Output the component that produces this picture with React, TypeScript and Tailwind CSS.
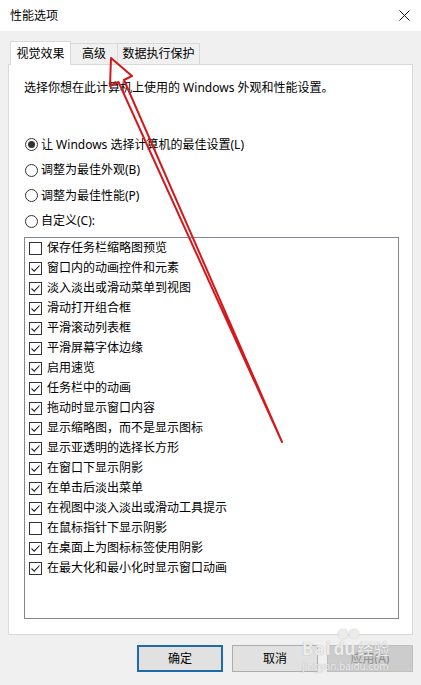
const effects: [string, boolean][] = [
  ["保存任务栏缩略图预览", false],
  ["窗口内的动画控件和元素", true],
  ["淡入淡出或滑动菜单到视图", true],
  ["滑动打开组合框", true],
  ["平滑滚动列表框", true],
  ["平滑屏幕字体边缘", true],
  ["启用速览", true],
  ["任务栏中的动画", true],
  ["拖动时显示窗口内容", true],
  ["显示缩略图，而不是显示图标", true],
  ["显示亚透明的选择长方形", true],
  ["在窗口下显示阴影", true],
  ["在单击后淡出菜单", true],
  ["在视图中淡入淡出或滑动工具提示", true],
  ["在鼠标指针下显示阴影", false],
  ["在桌面上为图标标签使用阴影", true],
  ["在最大化和最小化时显示窗口动画", true],
]

const modes = ["让 Windows 选择计算机的最佳设置(L)", "调整为最佳外观(B)", "调整为最佳性能(P)", "自定义(C):"]

function Radio({ label, on }: { label: string; on: boolean }) {
  return (
    <div className="flex items-center h-[25.5px]">
      <span className="w-[13px] h-[13px] rounded-full border border-[#333] bg-white flex items-center justify-center">
        {on && <span className="w-[7px] h-[7px] rounded-full bg-[#333]" />}
      </span>
      <span className="ml-[3px]">{label}</span>
    </div>
  )
}

function Check({ label, on }: { label: string; on: boolean }) {
  return (
    <div className="flex items-center h-[20px] pl-[4px]">
      <span className="w-[13px] h-[13px] border border-[#333] bg-white flex items-center justify-center">
        {on && (
          <svg width="11" height="11" viewBox="0 0 11 11">
            <path d="M1.5 5.5 L4.2 8.2 L9.5 2.5" fill="none" stroke="#222" strokeWidth="1.1" />
          </svg>
        )}
      </span>
      <span className="ml-[5px]">{label}</span>
    </div>
  )
}

export default function App() {
  return (
    <div className="relative w-[421px] h-[685px] bg-[#f0f0f0] text-[12px] leading-[16px] text-black font-['Noto_Sans','Noto_Sans_CJK_SC',sans-serif] overflow-hidden">
      {/* title bar */}
      <div className="h-[31px] bg-white flex items-center justify-between pl-[10px] pr-[11px]">
        <span>性能选项</span>
        <svg width="11" height="11" viewBox="0 0 11 11">
          <path d="M0.5 0.5 L10.5 10.5 M10.5 0.5 L0.5 10.5" stroke="#111" strokeWidth="1" />
        </svg>
      </div>

      <div className="px-[8px] pt-[10px]">
        {/* tabs */}
        <div className="flex items-end pl-[2px] h-[23px]">
          <div className="relative z-10 h-[24px] -mb-px bg-white border border-b-0 border-[#d9d9d9] w-[61px] flex items-center justify-center">
            视觉效果
          </div>
          <div className="h-[21px] bg-[#f0f0f0] border border-l-0 border-b-0 border-[#d9d9d9] w-[47px] flex items-center justify-center">
            高级
          </div>
          <div className="h-[21px] bg-[#f0f0f0] border border-l-0 border-b-0 border-[#d9d9d9] w-[82px] flex items-center justify-center">
            数据执行保护
          </div>
        </div>

        {/* panel */}
        <div className="h-[571px] bg-white border border-[#d9d9d9] pt-[15px] pl-[15px] pr-[13px]">
          <p>选择你想在此计算机上使用的 Windows 外观和性能设置。</p>

          <div className="mt-[36px] pl-[1px]">
            {modes.map((m, i) => (
              <Radio key={m} label={m} on={i === 0} />
            ))}
          </div>

          <div className="mt-[3px] h-[382px] border border-[#828790]">
            {effects.map(([label, on]) => (
              <Check key={label} label={label} on={on} />
            ))}
          </div>
        </div>

        {/* buttons */}
        <div className="flex justify-end gap-[9px] mt-[10px]">
          <button className="w-[86px] h-[27px] bg-[#e1e1e1] border-2 border-[#1f6aa8]">确定</button>
          <button className="w-[86px] h-[27px] bg-[#e1e1e1] border border-[#adadad]">取消</button>
          <button className="w-[86px] h-[27px] bg-[#cccccc] border border-[#bfbfbf] text-[#8c8c8c]">应用(A)</button>
        </div>
      </div>

      {/* watermark */}
      <div className="absolute left-[302px] top-[628px] pointer-events-none text-white/80 [text-shadow:0_0_1px_#9a9a9a]">
        <div className="flex items-end h-[30px]">
          <span className="text-[17px] leading-[18px] font-bold tracking-[1px]">Bai</span>
          <span className="relative text-[17px] leading-[18px] font-bold ml-[2px]">
            du
            <span className="absolute left-[4px] -top-[12px] text-[11px] leading-[11px]">●●</span>
          </span>
          <span className="text-[16px] leading-[18px] ml-[2px]">经验</span>
        </div>
        <div className="text-[10px] leading-[12px] mt-[2px]">jingyan.baidu.com</div>
      </div>

      {/* red arrow */}
      <svg className="absolute inset-0 pointer-events-none" width="421" height="685" viewBox="0 0 421 685">
        <polygon
          points="111,58 132,76 124,80 282,442 118.5,82 110,86"
          fill="none"
          stroke="#d3191c"
          strokeWidth="2"
          strokeLinejoin="round"
        />
      </svg>
    </div>
  )
}
